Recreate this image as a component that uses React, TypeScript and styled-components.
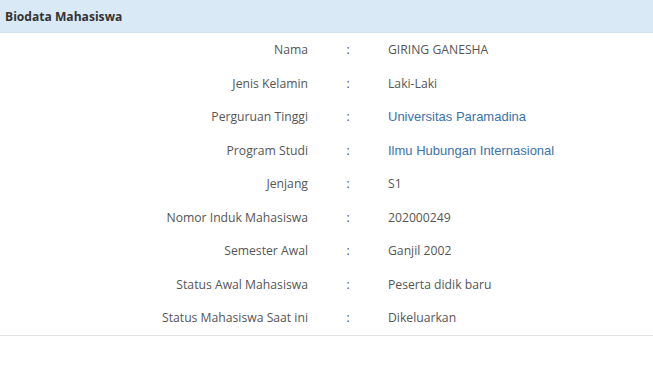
import { Fragment } from "react";
import styled, { createGlobalStyle } from "styled-components";

const GlobalStyle = createGlobalStyle`
  body {
    margin: 0;
    background: #ffffff;
    font-family: "Open Sans", "Noto Sans", sans-serif;
  }
`;

const Panel = styled.div`
  width: 653px;
  background: #fff;
  border-bottom: 1px solid #e2e2e2;
`;

const PanelHeading = styled.div`
  height: 32px;
  display: flex;
  align-items: center;
  padding-left: 5px;
  background: #d9eaf6;
  border-bottom: 1px solid #cfe2ef;
  color: #333;
  font-weight: 700;
  font-size: 12.1px;
`;

const InfoTable = styled.div`
  display: grid;
  grid-template-columns: 318px 60px 1fr;
  grid-auto-rows: 33.5px;
  align-items: center;
  font-size: 12.2px;
  color: #555;
`;

const Label = styled.div`
  text-align: right;
  padding-right: 10px;
`;

const Colon = styled.div`
  text-align: center;
`;

const Value = styled.div<{ $link?: boolean }>`
  padding-left: 10px;
  color: ${(p) => (p.$link ? "#3d72a8" : "#555")};
  font-family: ${(p) =>
    p.$link ? '"Liberation Sans", Arial, sans-serif' : "inherit"};
  font-size: ${(p) => (p.$link ? "13px" : "12.2px")};
`;

const rows: { label: string; value: string; link?: boolean }[] = [
  { label: "Nama", value: "GIRING GANESHA" },
  { label: "Jenis Kelamin", value: "Laki-Laki" },
  { label: "Perguruan Tinggi", value: "Universitas Paramadina", link: true },
  { label: "Program Studi", value: "Ilmu Hubungan Internasional", link: true },
  { label: "Jenjang", value: "S1" },
  { label: "Nomor Induk Mahasiswa", value: "202000249" },
  { label: "Semester Awal", value: "Ganjil 2002" },
  { label: "Status Awal Mahasiswa", value: "Peserta didik baru" },
  { label: "Status Mahasiswa Saat ini", value: "Dikeluarkan" },
];

export default function App() {
  return (
    <>
      <GlobalStyle />
      <Panel>
        <PanelHeading>Biodata Mahasiswa</PanelHeading>
        <InfoTable>
          {rows.map((r) => (
            <Fragment key={r.label}>
              <Label>{r.label}</Label>
              <Colon>:</Colon>
              <Value $link={r.link}>{r.value}</Value>
            </Fragment>
          ))}
        </InfoTable>
      </Panel>
    </>
  );
}
